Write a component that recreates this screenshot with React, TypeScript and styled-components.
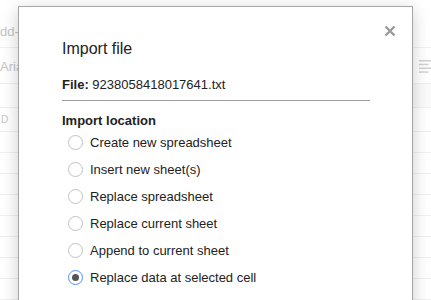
import React from "react";
import styled, { createGlobalStyle } from "styled-components";

const Global = createGlobalStyle`
  html, body {
    margin: 0;
    padding: 0;
    background: #fff;
    overflow: hidden;
  }
  body {
    font-family: "Liberation Sans", Arial, sans-serif;
  }
`;

const Page = styled.div`
  position: relative;
  width: 431px;
  height: 300px;
  overflow: hidden;
`;

/* faded spreadsheet behind the modal */
const Sheet = styled.div`
  display: flex;
  flex-direction: column;
  color: #c4c4c4;
`;

const MenuBar = styled.div`
  height: 48px;
  border-bottom: 1px solid #f0f0f0;
  display: flex;
  align-items: flex-end;
  padding-bottom: 7px;
  box-sizing: border-box;
  font-size: 13px;
  line-height: 16px;
  white-space: nowrap;
`;

const ToolBar = styled.div`
  height: 36px;
  border-bottom: 1px solid #f0f0f0;
  display: flex;
  align-items: center;
  justify-content: space-between;
  box-sizing: border-box;
  font-size: 13px;
  padding-top: 1px;
`;

const FormulaBar = styled.div`
  height: 24px;
  border-bottom: 1px solid #f0f0f0;
  box-sizing: border-box;
  display: flex;
  justify-content: flex-end;
`;

const FormulaShade = styled.div`
  width: 20px;
  background: #fafafa;
`;

const HeaderRow = styled.div`
  height: 24px;
  border-bottom: 1px solid #f0f0f0;
  box-sizing: border-box;
  font-size: 10px;
  line-height: 12px;
  padding: 6px 0 0 1px;
`;

const GridRow = styled.div`
  height: 21px;
  border-bottom: 1px solid #f0f0f0;
  box-sizing: border-box;
`;

/* modal */
const Dialog = styled.div`
  position: absolute;
  left: 18px;
  top: 6px;
  width: 395px;
  height: 320px;
  box-sizing: border-box;
  background: #fff;
  border: 1px solid #a6a6a6;
  box-shadow: 0 4px 16px rgba(0, 0, 0, 0.2);
  padding: 32px 42px 0 43px;
  color: #222;
`;

const Close = styled.div`
  position: absolute;
  right: 16px;
  top: 16px;
  width: 12px;
  height: 12px;
`;

const Title = styled.div`
  font-size: 16px;
  line-height: 20px;
`;

const FileRow = styled.div`
  margin-top: 18px;
  font-size: 13px;
  line-height: 16px;
  padding-bottom: 7px;
  border-bottom: 1px solid #9e9e9e;
`;

const Bold = styled.span`
  font-weight: bold;
`;

const Section = styled.div`
  margin-top: 12px;
  font-size: 13px;
  line-height: 16px;
  font-weight: bold;
`;

const RadioList = styled.div`
  display: flex;
  flex-direction: column;
`;

const RadioRow = styled.label`
  height: 27px;
  display: flex;
  align-items: center;
  gap: 7px;
  padding-left: 6px;
  font-size: 13px;
  line-height: 16px;
`;

const Circle = styled.span<{ $on?: boolean }>`
  width: 15px;
  height: 15px;
  box-sizing: border-box;
  border-radius: 50%;
  border: 1px solid ${(p) => (p.$on ? "#4d90fe" : "#c2c2c2")};
  display: flex;
  align-items: center;
  justify-content: center;
  flex-shrink: 0;
`;

const Dot = styled.span`
  width: 7px;
  height: 7px;
  border-radius: 50%;
  background: #555;
`;

const options = [
  "Create new spreadsheet",
  "Insert new sheet(s)",
  "Replace spreadsheet",
  "Replace current sheet",
  "Append to current sheet",
  "Replace data at selected cell",
];

export default function App() {
  return (
    <Page>
      <Global />
      <Sheet>
        <MenuBar>dd-ons</MenuBar>
        <ToolBar>
          <span>Arial</span>
          <svg width="12" height="13" viewBox="0 0 12 13">
            <rect x="0" y="0" width="12" height="1.5" fill="#d0d0d0" />
            <rect x="0" y="3.7" width="9.5" height="1.5" fill="#d0d0d0" />
            <rect x="0" y="7.5" width="12" height="1.5" fill="#d0d0d0" />
            <rect x="0" y="11.3" width="9.5" height="1.5" fill="#d0d0d0" />
          </svg>
        </ToolBar>
        <FormulaBar>
          <FormulaShade />
        </FormulaBar>
        <HeaderRow>D</HeaderRow>
        {Array.from({ length: 8 }).map((_, i) => (
          <GridRow key={i} />
        ))}
      </Sheet>

      <Dialog>
        <Close>
          <svg width="12" height="12" viewBox="0 0 12 12">
            <path d="M1.5 1.5 L10.5 10.5 M10.5 1.5 L1.5 10.5" stroke="#9a9a9a" strokeWidth="2.4" />
          </svg>
        </Close>
        <Title>Import file</Title>
        <FileRow>
          <Bold>File:</Bold> 9238058418017641.txt
        </FileRow>
        <Section>Import location</Section>
        <RadioList>
          {options.map((o, i) => (
            <RadioRow key={o}>
              <Circle $on={i === options.length - 1}>
                {i === options.length - 1 && <Dot />}
              </Circle>
              {o}
            </RadioRow>
          ))}
        </RadioList>
      </Dialog>
    </Page>
  );
}
